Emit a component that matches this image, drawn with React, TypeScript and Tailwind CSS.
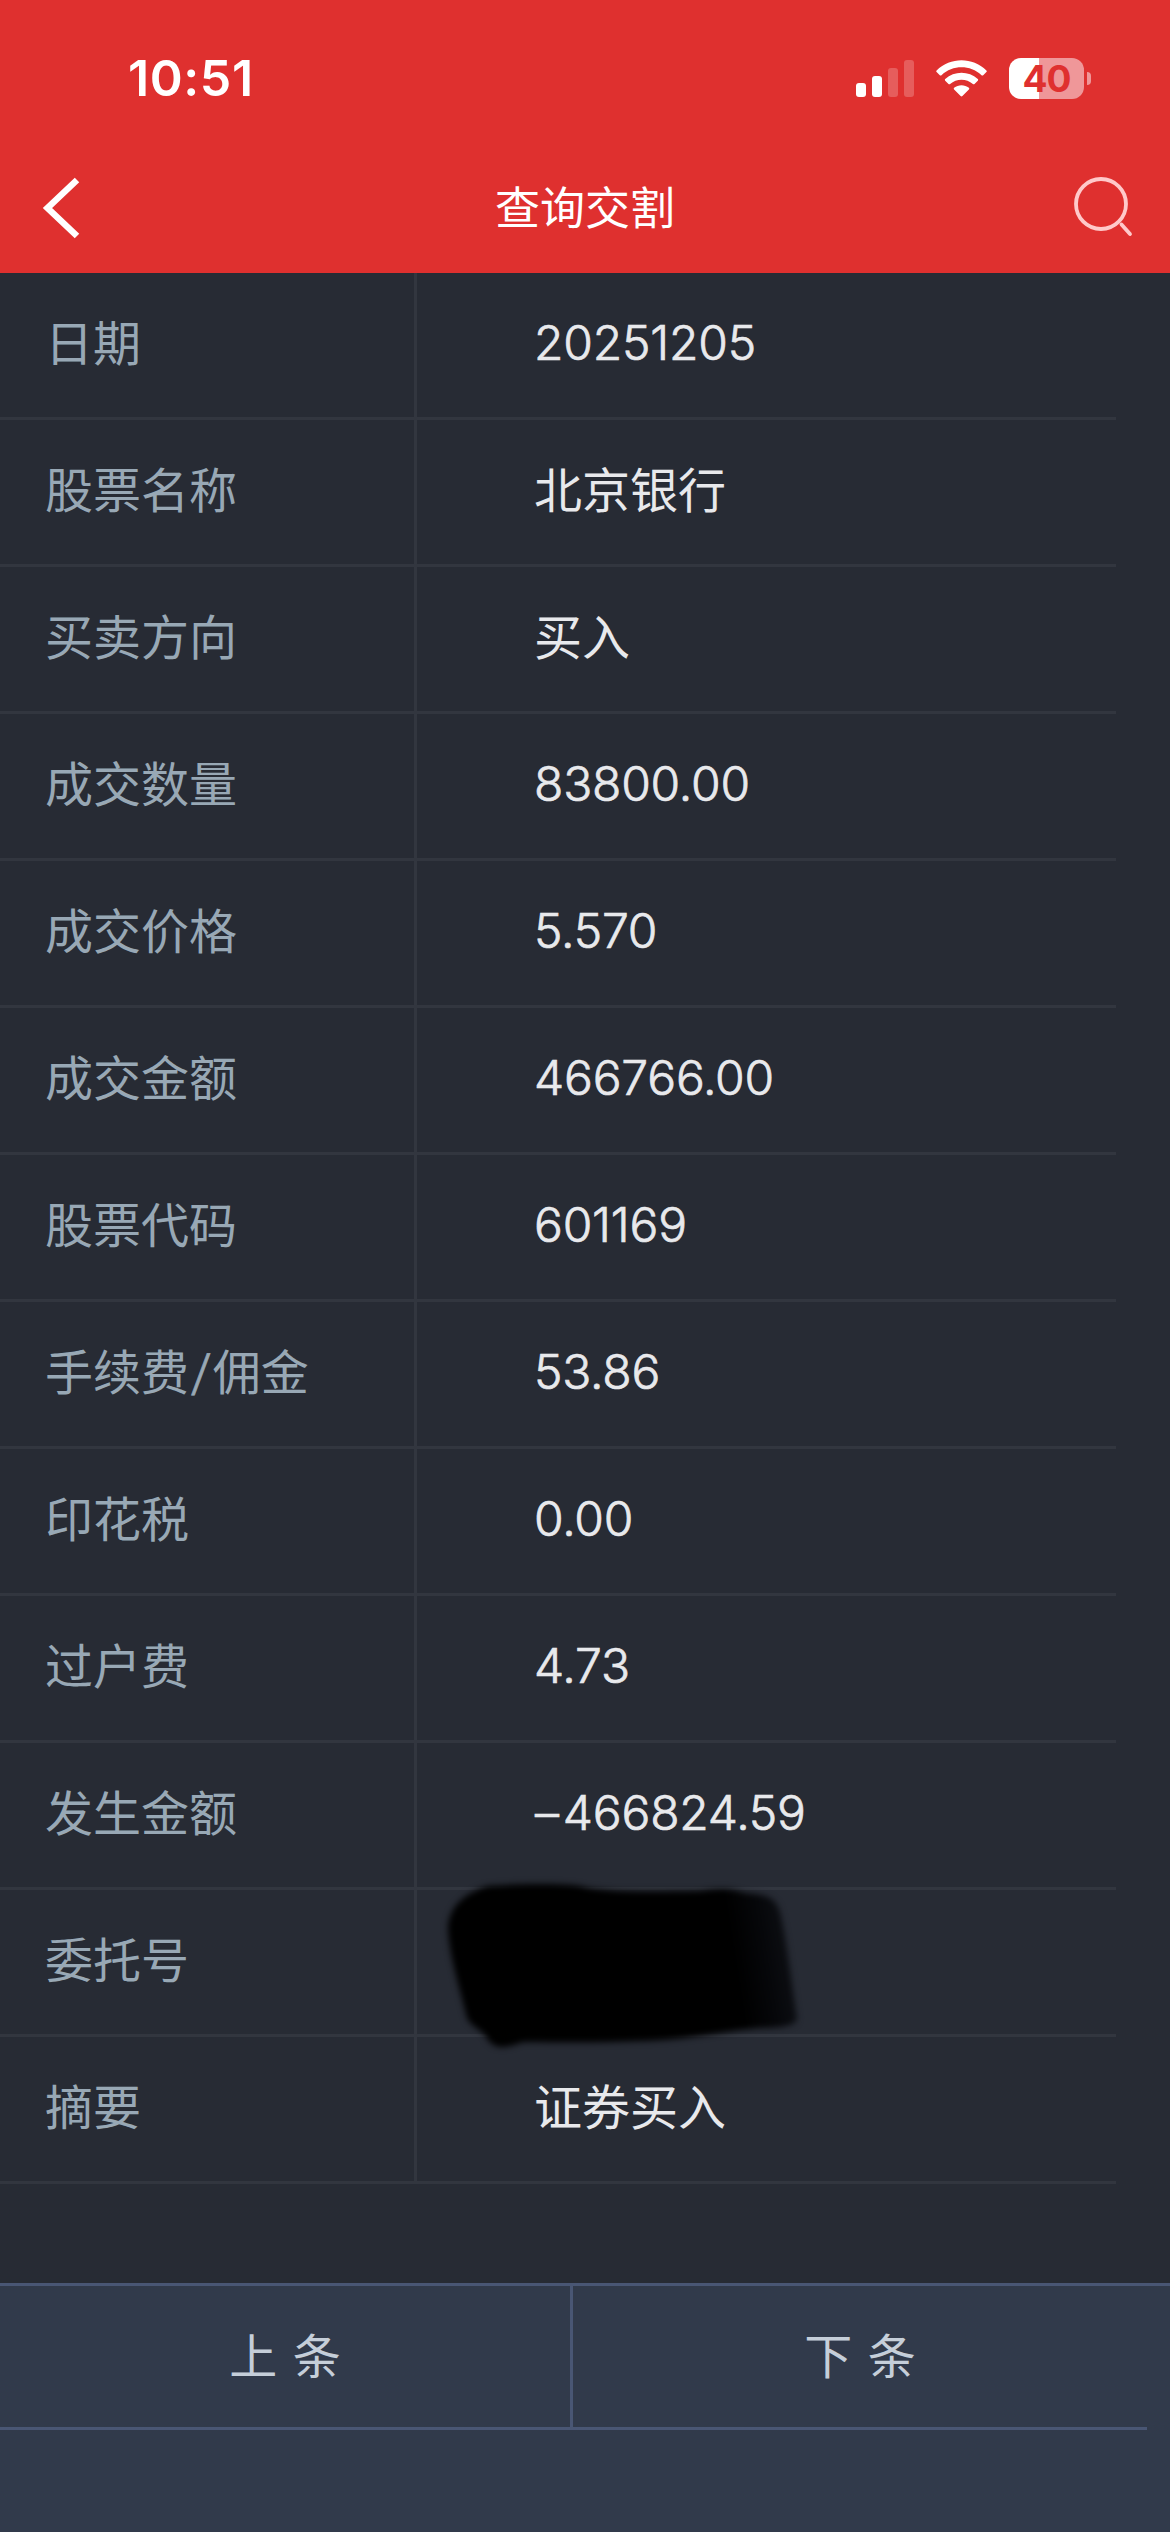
const rows = [
  { label: '日期', value: '20251205' },
  { label: '股票名称', value: '北京银行' },
  { label: '买卖方向', value: '买入' },
  { label: '成交数量', value: '83800.00' },
  { label: '成交价格', value: '5.570' },
  { label: '成交金额', value: '466766.00' },
  { label: '股票代码', value: '601169' },
  { label: '手续费/佣金', value: '53.86' },
  { label: '印花税', value: '0.00' },
  { label: '过户费', value: '4.73' },
  { label: '发生金额', value: '–466824.59' },
  { label: '委托号', value: null },
  { label: '摘要', value: '证券买入' },
]

function StatusIcons() {
  return (
    <div className="flex items-center">
      {/* Signal */}
      <svg width="58" height="37" viewBox="0 0 58 37" fill="#fff">
        <rect x="0" y="23" width="10" height="14" rx="3" />
        <rect x="16" y="16" width="10" height="21" rx="3" />
        <rect x="32" y="8" width="10" height="29" rx="3" opacity="0.22" />
        <rect x="48" y="0" width="10" height="37" rx="3" opacity="0.22" />
      </svg>

      {/* Wifi */}
      <svg className="ml-[22px]" width="51" height="37" viewBox="0 0 51 37" fill="#fff">
        <path d="M0.6 10.4C14.5 -3.2 36.5 -3.2 50.4 10.4C50.9 10.9 50.9 11.6 50.4 12.1L47.2 15.2C46.7 15.7 46 15.7 45.5 15.2C34.3 4.7 16.7 4.7 5.5 15.2C5 15.7 4.3 15.7 3.8 15.2L0.6 12.1C0.1 11.6 0.1 10.9 0.6 10.4Z" />
        <path d="M9.2 19C18.3 10.5 32.7 10.5 41.8 19C42.3 19.5 42.3 20.2 41.8 20.7L38.5 23.9C38 24.4 37.4 24.4 36.9 23.9C30.5 18.2 20.5 18.2 14.1 23.9C13.6 24.4 13 24.4 12.5 23.9L9.2 20.7C8.7 20.2 8.7 19.5 9.2 19Z" />
        <path d="M18.1 27.8C22.3 24.3 28.7 24.3 32.9 27.8C33.4 28.3 33.4 29 32.9 29.5L26.4 36C25.9 36.5 25.1 36.5 24.6 36L18.1 29.5C17.6 29 17.6 28.3 18.1 27.8Z" />
      </svg>

      {/* Battery */}
      <div className="ml-[22px] flex items-center gap-[3px]">
        <div className="flex h-[41px] w-[75px] items-center justify-center rounded-[12px] bg-[linear-gradient(90deg,#fff_40%,#ef9799_40%)]">
          <span className="text-[37px] leading-none font-bold tracking-[-1px] text-[#df302f]">40</span>
        </div>
        <div className="h-[13px] w-1 rounded-r-full bg-[#ef9799]" />
      </div>
    </div>
  )
}

function Scribble() {
  return (
    <svg className="absolute top-[-20px] left-[20px]" width="380" height="190" viewBox="437 1870 380 190">
      <defs>
        <filter id="soft" x="-10%" y="-10%" width="120%" height="120%" colorInterpolationFilters="sRGB">
          <feGaussianBlur stdDeviation="3" />
        </filter>
        <linearGradient id="fade" gradientUnits="userSpaceOnUse" x1="735" x2="797" y1="1960" y2="1950">
          <stop offset="0" stopColor="#000" />
          <stop offset="0.5" stopColor="#06070a" />
          <stop offset="1" stopColor="#0f1116" />
        </linearGradient>
      </defs>
      <path
        filter="url(#soft)"
        fill="url(#fade)"
        d="M488 1886C510 1884 560 1883 580 1886C600 1892 640 1892 700 1891C720 1888 730 1888 745 1893C765 1895 775 1896 780 1912C786 1935 792 1985 797 2018C797 2026 780 2028 760 2028C720 2031 690 2040 640 2041C600 2043 550 2042 523 2042C510 2046 498 2052 488 2040C484 2030 472 2028 467 2018C459 1985 449 1955 448 1928C449 1908 462 1894 488 1886Z"
      />
    </svg>
  )
}

function Value({ value }: { value: string }) {
  if (!/\d/.test(value)) return <span>{value}</span>
  return (
    <span className="pb-[2px] font-light tracking-[-0.2px] [-webkit-text-stroke:0.7px_#e8e9ec]">
      {value.startsWith('–') && <span className="mr-[4px] ml-[1px]">–</span>}
      {value.replace('–', '')}
    </span>
  )
}

export default function App() {
  return (
    <div className="flex h-[2532px] w-[1170px] flex-col overflow-hidden bg-[#272b34] font-['Inter','Noto_Sans_CJK_SC',sans-serif]">
      <header className="h-[273px] bg-[#df302f] text-white">
        <div className="flex h-[156px] items-center justify-between pr-[79px] pl-[128px]">
          <span className="text-[50px] leading-none font-semibold tracking-[0.6px]">10:51</span>
          <StatusIcons />
        </div>

        <div className="grid h-[104px] grid-cols-[1fr_auto_1fr] items-center pr-[36px] pl-[40px]">
          <svg width="44" height="64" viewBox="40 176 44 64" fill="none" stroke="#fff" strokeWidth="6.5">
            <path d="M77 180L47.5 208L77 236" />
          </svg>
          <h1 className="pr-[4px] text-[45px] leading-none font-normal">查询交割</h1>
          <svg className="justify-self-end" width="64" height="64" viewBox="1070 176 64 64" fill="none" stroke="#ffc9ca" strokeWidth="3.8" strokeLinecap="round">
            <circle cx="1101" cy="204" r="25" />
            <path d="M1121.5 224.5L1130 234" />
          </svg>
        </div>
      </header>

      <main className="w-[1116px] flex-1 text-[48px] leading-none font-normal">
        {rows.map((row) => (
          <div key={row.label} className="flex h-[147px] border-b-[3px] border-[#32363f]">
            <div className="flex w-[417px] items-center border-r-[3px] border-[#32363f] pb-[2px] pl-[45px] text-[#98a8b5]">
              {row.label.split('/').map((part, i) => (
                <span key={part}>
                  {i > 0 && <span className="inline-block -skew-x-6 px-[3.5px] font-light [-webkit-text-stroke:0.7px_#98a8b5]">/</span>}
                  {part}
                </span>
              ))}
            </div>
            <div className="relative flex flex-1 items-center pb-[2px] pl-[117px] text-[#e8e9ec]">
              {row.value ? <Value value={row.value} /> : <Scribble />}
            </div>
          </div>
        ))}
      </main>

      <footer className="h-[249px] border-t-[3px] border-[#495674] bg-[#313a4b] text-[48px] leading-none font-normal text-[#c5ced9]">
        <div className="flex h-[144px] w-[1147px] border-b-[3px] border-[#495674]">
          <button className="w-[573px] border-r-[3px] border-[#495674] [word-spacing:2px]">上 条</button>
          <button className="flex-1 [word-spacing:2px]">下 条</button>
        </div>
      </footer>
    </div>
  )
}
